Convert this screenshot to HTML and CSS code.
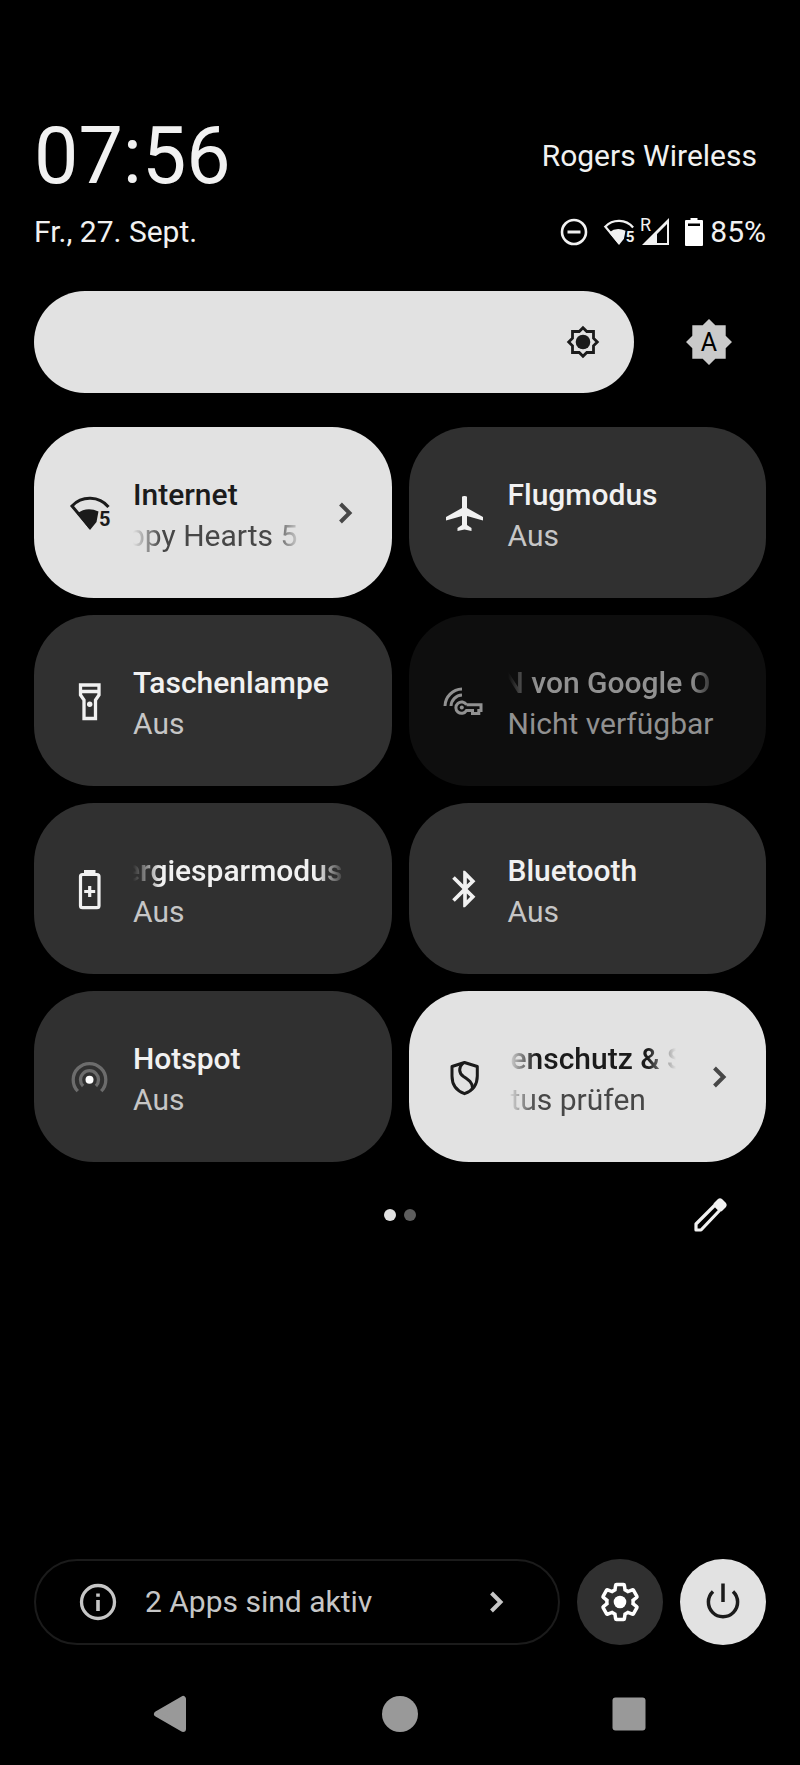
FILE: index.html
```
<!DOCTYPE html>
<html lang="de">
<head>
    <meta charset="UTF-8">
    <meta name="viewport" content="width=device-width, initial-scale=1.0">
    <title>Schnelleinstellungen</title>
    <link rel="stylesheet" href="styles.css">
</head>
<body>
    <!-- shared icons -->
    <svg class="icon-defs" aria-hidden="true">
        <symbol id="wifi" viewBox="0 0 42 42">
            <path d="M39.500 15A24.500 24.500 0 0 0 3 14L21 35.500" fill="none" stroke="currentColor" stroke-width="3"/>
            <path d="M8 21.500Q18 14 29.500 19.500L27.500 30L21 38Z" fill="currentColor"/>
            <text x="30" y="34" class="wifi-number">5</text>
        </symbol>
        <symbol id="chevron" viewBox="0 0 42 42">
            <path d="M16.500 12L25.500 21L16.500 30" fill="none" stroke="currentColor" stroke-width="4"/>
        </symbol>
    </svg>

    <main class="shade">
        <header class="header">
            <div class="header-row">
                <time class="clock">07:56</time>
                <span class="carrier">Rogers Wireless</span>
            </div>
            <div class="header-row header-status">
                <span>Fr., 27. Sept.</span>
                <div class="status">
                    <svg class="status-dnd" viewBox="0 0 28 28">
                        <circle cx="14" cy="14" r="12" fill="none" stroke="currentColor" stroke-width="2.600"/>
                        <path d="M7.500 14H20.500" stroke="currentColor" stroke-width="3"/>
                    </svg>
                    <svg class="status-wifi"><use href="#wifi"/></svg>
                    <svg class="status-signal" viewBox="0 0 28 28">
                        <path d="M0 27L27 0V27Z M25 6V25H15V16Z" fill="currentColor" fill-rule="evenodd"/>
                        <text x="-2" y="13" class="roaming">R</text>
                    </svg>
                    <svg class="status-battery" viewBox="0 0 18 28">
                        <path d="M5.500 0H12.500V2H17Q18 2 18 3V27Q18 28 17 28H1Q0 28 0 27V3Q0 2 1 2H5.500Z M3 5.500V8H15V5.500Z" fill="#fff" fill-rule="evenodd"/>
                    </svg>
                    <span>85%</span>
                </div>
            </div>
        </header>

        <div class="brightness">
            <div class="slider">
                <input type="range" min="0" max="100" value="100" aria-label="Helligkeit">
                <svg class="sun" viewBox="-17 -17 34 34">
                    <path d="M0 -14.300L3.800 -10.500H10.500V-3.800L14.300 0L10.500 3.800V10.500H3.800L0 14.300L-3.800 10.500H-10.500V3.800L-14.300 0L-10.500 -3.800V-10.500H-3.800Z" fill="none" stroke="#1b1b1b" stroke-width="2.800"/>
                    <circle r="7.300" fill="#1b1b1b"/>
                </svg>
            </div>
            <button class="auto" aria-label="Automatische Helligkeit">
                <svg viewBox="-23 -23 46 46">
                    <path d="M0 -23L6.300 -16.700H16.700V-6.300L23 0L16.700 6.300V16.700H6.300L0 23L-6.300 16.700H-16.700V6.300L-23 0L-16.700 -6.300V-16.700H-6.300Z" fill="#cacaca"/>
                    <text x="0" y="9" text-anchor="middle" class="auto-letter">A</text>
                </svg>
            </button>
        </div>

        <div class="tiles">
            <button class="tile tile-on tile-more">
                <svg class="icon"><use href="#wifi"/></svg>
                <span class="tile-text">
                    <span class="label">Internet</span>
                    <span class="state fade"><span class="scroll-short">ppy Hearts 5</span></span>
                </span>
                <svg class="icon chevron"><use href="#chevron"/></svg>
            </button>

            <button class="tile">
                <svg class="icon" viewBox="0 0 42 42">
                    <path d="M18 5Q18 4 20.500 4T23 5V16L39 25V28.500L23 24V33L27.500 36V39L20.500 37.500L13.500 39V36L18 33V24L2 28.500V25L18 16Z" fill="currentColor"/>
                </svg>
                <span class="tile-text">
                    <span class="label">Flugmodus</span>
                    <span class="state">Aus</span>
                </span>
            </button>

            <button class="tile">
                <svg class="icon" viewBox="0 0 42 42">
                    <path d="M11.500 5H30V15L26.500 20V38.500H15V20L11.500 15ZM11.500 11.500H30" fill="none" stroke="currentColor" stroke-width="3.300"/>
                    <circle cx="20.700" cy="24.300" r="2.700" fill="currentColor"/>
                </svg>
                <span class="tile-text">
                    <span class="label">Taschenlampe</span>
                    <span class="state">Aus</span>
                </span>
            </button>

            <button class="tile tile-disabled" disabled>
                <svg class="icon" viewBox="0 0 42 42">
                    <g fill="none" stroke="currentColor" stroke-width="3">
                        <path d="M1 26A17.500 17.500 0 0 1 18 9M7 26A11.500 11.500 0 0 1 18 15"/>
                        <path d="M22.500 24.800H37V30.500H34.800V33.500H28.500V30.500H22.500A5.700 5.700 0 1 1 22.500 24.800"/>
                    </g>
                    <circle cx="17.800" cy="27.500" r="2" fill="currentColor"/>
                </svg>
                <span class="tile-text">
                    <span class="label fade"><span class="scroll-short">N von Google O</span></span>
                    <span class="state">Nicht verfügbar</span>
                </span>
            </button>

            <button class="tile">
                <svg class="icon" viewBox="0 0 42 42">
                    <rect x="11.500" y="6.500" width="18.500" height="33.200" rx="2" fill="none" stroke="currentColor" stroke-width="3.200"/>
                    <path d="M15 2H26.500V7H15Z" fill="currentColor"/>
                    <path d="M20.700 18V29M15.200 23.500H26.200" stroke="currentColor" stroke-width="3.200"/>
                </svg>
                <span class="tile-text">
                    <span class="label fade"><span class="scroll-long">ergiesparmodus</span></span>
                    <span class="state">Aus</span>
                </span>
            </button>

            <button class="tile">
                <svg class="icon" viewBox="0.500 0.500 23 23">
                    <path d="M17.710 7.710L12 2h-1v7.590L6.410 5 5 6.410 10.590 12 5 17.590 6.410 19 11 14.410V22h1l5.710-5.710-4.300-4.290 4.300-4.290zM13 5.830l1.880 1.880L13 9.590V5.830zm1.880 10.460L13 18.170v-3.760l1.880 1.880z" fill="currentColor"/>
                </svg>
                <span class="tile-text">
                    <span class="label">Bluetooth</span>
                    <span class="state">Aus</span>
                </span>
            </button>

            <button class="tile">
                <svg class="icon" viewBox="0 0 42 42">
                    <g fill="none" stroke="#6c6c6c" stroke-width="3.300">
                        <path d="M8.800 35.200A16.300 16.300 0 1 1 32.200 35.200"/>
                        <path d="M14.100 30A9 9 0 1 1 26.900 30"/>
                    </g>
                    <circle cx="20.500" cy="23.700" r="4" fill="#fff"/>
                </svg>
                <span class="tile-text">
                    <span class="label">Hotspot</span>
                    <span class="state">Aus</span>
                </span>
            </button>

            <button class="tile tile-on tile-more">
                <svg class="icon" viewBox="0 0 42 42">
                    <g fill="none" stroke="currentColor" stroke-width="3">
                        <path d="M20.500 6.500L33.300 10.500V20C33.300 29 28 35 20.500 37.700C13 35 8 29 8 20V10.500Z" stroke-linejoin="round"/>
                        <path d="M19 7C14.500 11.500 14.500 17 19.500 20.500C25 24 28.500 26.500 28.500 32"/>
                    </g>
                </svg>
                <span class="tile-text">
                    <span class="label fade"><span class="scroll-none">enschutz &amp; S</span></span>
                    <span class="state fade"><span class="scroll-none">tus prüfen</span></span>
                </span>
                <svg class="icon chevron"><use href="#chevron"/></svg>
            </button>
        </div>

        <div class="pager">
            <div class="dots">
                <span class="dot dot-active"></span>
                <span class="dot"></span>
            </div>
            <button class="edit" aria-label="Bearbeiten">
                <svg class="icon" viewBox="0 0 42 42">
                    <path d="M7 36V30L26 11L31 16L12 36Z" fill="none" stroke="currentColor" stroke-width="3.200" stroke-linejoin="round"/>
                    <path d="M24.500 9.500L29 5Q31 3.500 33 5L37 9Q38.500 11 37 13L32.500 17.500Z" fill="currentColor"/>
                </svg>
            </button>
        </div>

        <footer class="footer">
            <button class="apps">
                <svg class="icon" viewBox="0 0 42 42">
                    <circle cx="21" cy="21" r="16.500" fill="none" stroke="currentColor" stroke-width="3.300"/>
                    <path d="M21 12.500V15.800M21 19V30" stroke="currentColor" stroke-width="3.600"/>
                </svg>
                <span class="apps-text">2 Apps sind aktiv</span>
                <svg class="icon"><use href="#chevron"/></svg>
            </button>
            <button class="round" aria-label="Einstellungen">
                <svg class="icon" viewBox="0 0 24 24">
                    <path d="M19.430 12.980c.04-.32.07-.64.07-.98 0-.34-.03-.66-.07-.98l2.110-1.650c.19-.15.24-.42.12-.64l-2-3.460c-.09-.16-.26-.25-.44-.25-.06 0-.12.01-.17.03l-2.490 1c-.52-.4-1.080-.73-1.690-.98l-.38-2.650C14.460 2.180 14.250 2 14 2h-4c-.25 0-.46.18-.49.42l-.38 2.650c-.61.25-1.170.59-1.690.98l-2.490-1c-.06-.02-.12-.03-.18-.03-.17 0-.34.09-.43.25l-2 3.460c-.13.22-.07.49.12.64l2.110 1.650c-.04.32-.07.65-.07.98 0 .33.03.66.07.98l-2.110 1.650c-.19.15-.24.42-.12.64l2 3.460c.09.16.26.25.44.25.06 0 .12-.01.17-.03l2.490-1c.52.4 1.080.73 1.690.98l.38 2.650c.03.24.24.42.49.42h4c.25 0 .46-.18.49-.42l.38-2.650c.61-.25 1.170-.59 1.690-.98l2.490 1c.06.02.12.03.18.03.17 0 .34-.09.43-.25l2-3.460c.12-.22.07-.49-.12-.64l-2.110-1.650z" fill="none" stroke="#fff" stroke-width="2"/>
                    <circle cx="12" cy="12" r="3.600" fill="#fff"/>
                </svg>
            </button>
            <button class="round round-on" aria-label="Ein/Aus">
                <svg class="icon" viewBox="0 0 42 42">
                    <path d="M11 10.500A14.600 14.600 0 1 0 31 10.500M21 2.500V21" fill="none" stroke="currentColor" stroke-width="3.500"/>
                </svg>
            </button>
        </footer>

        <nav class="nav">
            <button aria-label="Zurück">
                <svg class="icon" viewBox="0 0 42 42">
                    <path d="M7 21L33 6V36Z" fill="currentColor" stroke="currentColor" stroke-width="6" stroke-linejoin="round"/>
                </svg>
            </button>
            <button aria-label="Startseite">
                <svg class="icon" viewBox="0 0 42 42"><circle cx="21" cy="21" r="18" fill="currentColor"/></svg>
            </button>
            <button aria-label="Letzte Apps">
                <svg class="icon" viewBox="0 0 42 42"><rect x="4.500" y="4.500" width="33" height="33" rx="3" fill="currentColor"/></svg>
            </button>
        </nav>
    </main>
</body>
</html>
```
FILE: styles.css
```
/* styles.css */
* {
    box-sizing: border-box;
}

body {
    margin: 0;
    background-color: #000;
    color: #f1f1f1;
    font-family: Roboto, sans-serif;
    font-size: 30px;
    line-height: 40px;
}

button {
    margin: 0;
    padding: 0;
    border: none;
    background: none;
    color: inherit;
    font: inherit;
    text-align: left;
    cursor: pointer;
}

svg {
    display: block;
    flex-shrink: 0;
    overflow: visible;
}

.icon-defs {
    position: absolute;
    width: 0;
    height: 0;
}

.icon {
    width: 42px;
    height: 42px;
}

.shade {
    display: flex;
    flex-direction: column;
    min-height: 100vh;
    padding: 116px 34px 0;
}

/* Header */
.header {
    display: flex;
    flex-direction: column;
    gap: 16px;
}

.header-row {
    display: flex;
    justify-content: space-between;
    align-items: center;
}

.clock {
    font-size: 79px;
    line-height: 80px;
}

.carrier {
    padding-right: 9px;
}

.status {
    display: flex;
    align-items: center;
    gap: 7px;
}

.status-dnd {
    width: 28px;
    height: 28px;
    margin-right: 8px;
}

.status-wifi {
    width: 32px;
    height: 32px;
}

.status-signal {
    width: 28px;
    height: 28px;
    margin-right: 8px;
}

.status-battery {
    width: 18px;
    height: 28px;
}

.wifi-number {
    fill: currentColor;
    font-size: 20px;
    font-weight: 700;
}

.roaming {
    fill: currentColor;
    font-size: 18px;
}

/* Brightness */
.brightness {
    display: flex;
    gap: 17px;
    margin-top: 39px;
}

.slider {
    position: relative;
    flex: 1;
}

.slider input {
    display: block;
    width: 100%;
    height: 102px;
    margin: 0;
    border-radius: 51px;
    background-color: #e2e2e2;
    appearance: none;
    cursor: pointer;
}

.slider input::-webkit-slider-thumb {
    width: 102px;
    height: 102px;
    opacity: 0;
    appearance: none;
}

.sun {
    position: absolute;
    top: 34px;
    right: 34px;
    width: 34px;
    height: 34px;
    pointer-events: none;
}

.auto {
    display: flex;
    justify-content: center;
    align-items: center;
    width: 115px;
}

.auto svg {
    width: 46px;
    height: 46px;
}

.auto-letter {
    fill: #000;
    font-size: 25px;
}

/* Tiles */
.tiles {
    display: grid;
    grid-template-columns: 1fr 1fr;
    gap: 17px;
    margin-top: 34px;
}

.tile {
    display: flex;
    align-items: center;
    gap: 22px;
    min-width: 0;
    height: 171px;
    padding: 0 47px 0 35px;
    border-radius: 60px;
    background-color: #303030;
}

.tile-more {
    padding-right: 26px;
}

.tile-on {
    background-color: #e2e2e2;
    color: #1b1b1b;
}

.tile-disabled {
    background-color: #0e0e0e;
    color: #919191;
    cursor: default;
}

.tile-text {
    flex: 1;
    min-width: 0;
    padding-top: 4px;
}

.label,
.state {
    display: block;
    line-height: 41px;
    white-space: nowrap;
}

.label {
    font-weight: 500;
}

.state {
    color: #c6c6c6;
}

.tile-on .state,
.chevron {
    color: #474747;
}

.tile-disabled .state {
    color: #919191;
}

.fade {
    overflow: hidden;
    mask-image: linear-gradient(to right, transparent, #000 28px, #000 calc(100% - 28px), transparent);
}

.scroll-long {
    margin-left: -9px;
}

.scroll-short {
    margin-left: -5px;
}

.scroll-none {
    margin-left: 3px;
}

/* Pager */
.pager {
    display: grid;
    grid-template-columns: 1fr auto 1fr;
    align-items: center;
    height: 105px;
}

.dots {
    display: flex;
    grid-column: 2;
    gap: 8px;
}

.dot {
    width: 12px;
    height: 12px;
    border-radius: 50%;
    background-color: #5e5e5e;
}

.dot-active {
    background-color: #e2e2e2;
}

.edit {
    justify-self: end;
    margin-right: 35px;
}

/* Footer */
.footer {
    display: flex;
    gap: 17px;
    margin-top: auto;
    margin-bottom: 18px;
}

.apps {
    display: flex;
    flex: 1;
    align-items: center;
    gap: 26px;
    height: 86px;
    padding: 0 41px;
    border: 2px solid #1b1b1b;
    border-radius: 43px;
    color: #c6c6c6;
}

.apps-text {
    flex: 1;
}

.round {
    display: flex;
    justify-content: center;
    align-items: center;
    width: 86px;
    height: 86px;
    border-radius: 50%;
    background-color: #303030;
}

.round-on {
    background-color: #e2e2e2;
    color: #1b1b1b;
}

/* Navigation bar */
.nav {
    display: flex;
    height: 102px;
    padding: 0 23px;
    color: #999;
}

.nav button {
    display: flex;
    flex: 1;
    justify-content: center;
    align-items: center;
}
```
